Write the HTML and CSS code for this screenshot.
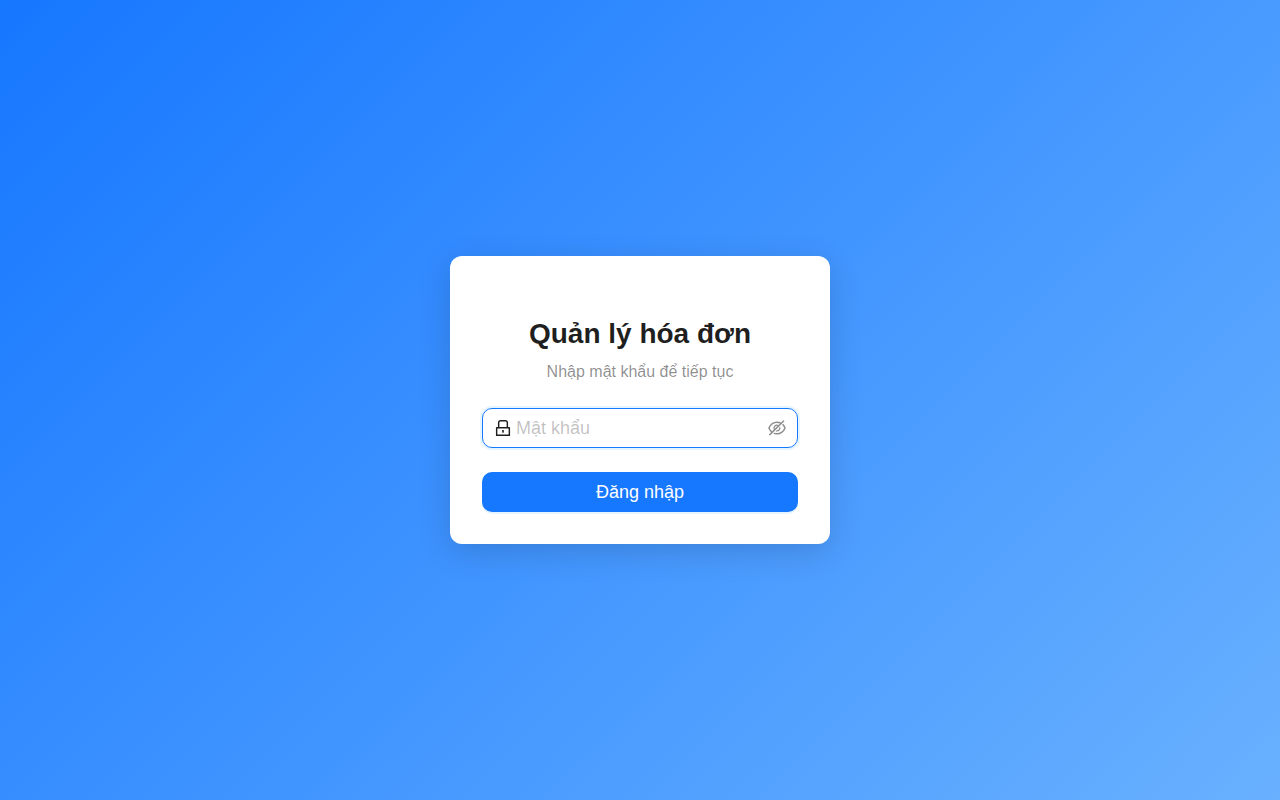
FILE: index.html
```html
<!DOCTYPE html>
<html lang="vi">
<head>
<meta charset="utf-8">
<meta name="viewport" content="width=device-width, initial-scale=1">
<title>Quản lý hóa đơn</title>
<link rel="stylesheet" href="styles.css">
</head>
<body>
<main class="login-page">
  <section class="login-card">
    <header class="login-header">
      <h2 class="login-title">Quản lý hóa đơn</h2>
      <p class="login-subtitle">Nhập mật khẩu để tiếp tục</p>
    </header>
    <form class="login-form">
      <div class="password-field">
        <svg class="icon" viewBox="64 64 896 896" aria-hidden="true"><path d="M832 464h-68V240c0-70.7-57.3-128-128-128H388c-70.7 0-128 57.3-128 128v224h-68c-17.7 0-32 14.3-32 32v384c0 17.7 14.3 32 32 32h640c17.7 0 32-14.3 32-32V496c0-17.7-14.3-32-32-32zM332 240c0-30.9 25.1-56 56-56h248c30.9 0 56 25.1 56 56v224H332V240zm460 600H232V536h560v304zM484 701v53c0 4.400 3.600 8 8 8h40c4.400 0 8-3.600 8-8v-53a48.010 48.010 0 10-56 0z"/></svg>
        <input class="password-input" type="password" placeholder="Mật khẩu" aria-label="Mật khẩu">
        <button class="reveal-button" type="button" aria-label="Hiện mật khẩu">
          <svg class="icon" viewBox="64 64 896 896" aria-hidden="true"><path d="M942.200 486.200Q889.470 375.110 816.700 305l-50.880 50.880C807.310 395.530 843.450 447.400 874.700 512 791.500 684.200 673.400 766 512 766q-72.670 0-133.870-22.380L323 798.750Q408 838 512 838q288.300 0 430.200-300.300a60.290 60.290 0 000-51.500zm-63.570-320.640L836 122.880a8 8 0 00-11.320 0L715.310 232.200Q624.860 186 512 186q-288.300 0-430.200 300.300a60.300 60.300 0 000 51.500q56.690 119.400 136.500 191.410L112.480 835a8 8 0 000 11.310L155.170 889a8 8 0 0011.310 0l712.150-712.120a8 8 0 000-11.320zM149.300 512C232.600 339.800 350.700 258 512 258c54.540 0 104.130 9.360 149.120 28.390l-70.300 70.300a176 176 0 00-238.130 238.130l-83.420 83.420C223.100 637.490 183.300 582.280 149.300 512zm246.700 0a112.110 112.110 0 01146.200-106.690L401.310 546.200A112 112 0 01396 512z"/><path d="M508 624c-3.460 0-6.870-.160-10.250-.470l-52.820 52.820a176.090 176.090 0 00227.420-227.420l-52.820 52.820c.310 3.380.470 6.790.470 10.250a111.940 111.940 0 01-112 112z"/></svg>
        </button>
      </div>
      <button class="submit-button" type="submit">Đăng nhập</button>
    </form>
  </section>
</main>
</body>
</html>
```
FILE: styles.css
```css
* {
  box-sizing: border-box;
}

body {
  margin: 0;
  font-family: "Liberation Sans", Arial, sans-serif;
  font-size: 16px;
  line-height: 24px;
}

.login-page {
  min-height: 100vh;
  padding: 16px;
  display: flex;
  align-items: center;
  justify-content: center;
  background: linear-gradient(135deg, #1677ff 0%, #69b1ff 100%);
}

.login-card {
  width: 100%;
  max-width: 380px;
  padding: 32px;
  border-radius: 12px;
  background: #fff;
  box-shadow: 0 8px 32px rgba(0, 0, 0, 0.15);
}

.login-header {
  padding-top: 24px;
  margin-bottom: 24px;
  text-align: center;
}

.login-title {
  margin: 0 0 4px;
  color: rgba(0, 0, 0, 0.88);
  font-size: 28px;
  line-height: 44px;
  font-weight: 600;
}

.login-subtitle {
  margin: 0;
  color: rgba(0, 0, 0, 0.45);
}

.login-form {
  display: flex;
  flex-direction: column;
  gap: 24px;
}

.password-field {
  height: 40px;
  padding: 0 11px;
  display: flex;
  align-items: center;
  gap: 4px;
  border: 1px solid #1677ff;
  border-radius: 10px;
  box-shadow: 0 0 0 2px rgba(5, 145, 255, 0.1);
  color: rgba(0, 0, 0, 0.88);
}

.icon {
  width: 18px;
  height: 18px;
  flex: none;
  display: block;
  fill: currentColor;
}

.password-input {
  flex: 1;
  min-width: 0;
  padding: 0;
  border: 0;
  outline: 0;
  background: transparent;
  color: inherit;
  font: inherit;
  font-size: 18px;
}

.password-input::placeholder {
  color: rgba(0, 0, 0, 0.25);
}

.reveal-button {
  padding: 0;
  border: 0;
  background: none;
  color: rgba(0, 0, 0, 0.45);
  cursor: pointer;
}

.submit-button {
  height: 40px;
  padding: 0 16px;
  border: 0;
  border-radius: 10px;
  background: #1677ff;
  box-shadow: 0 2px 0 rgba(5, 145, 255, 0.1);
  color: #fff;
  font: inherit;
  font-size: 18px;
  cursor: pointer;
}
```
